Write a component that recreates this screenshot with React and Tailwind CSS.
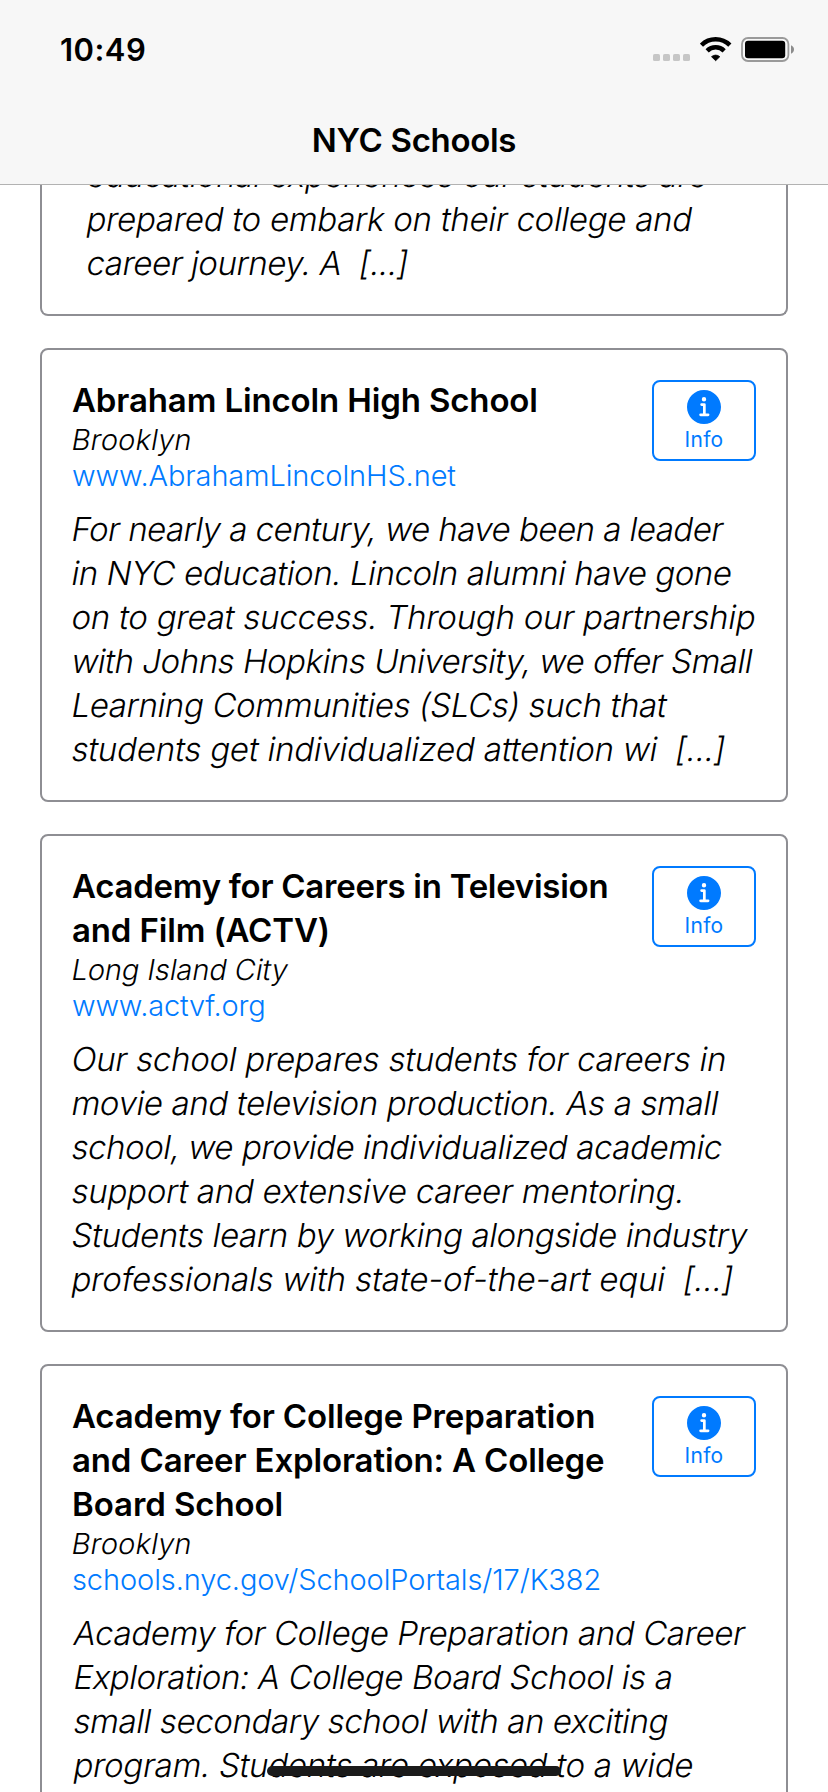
const previous = [
  { text: "educational experiences our students are", tracking: "tracking-[-0.31px]" },
  { text: "prepared to embark on their college and", tracking: "tracking-[-0.26px]" },
  { text: "career journey. A  [...]", tracking: "tracking-[-0.42px]" },
];

const schools = [
  {
    name: [{ text: "Abraham Lincoln High School", tracking: "tracking-[-0.14px]" }],
    city: { text: "Brooklyn", tracking: "tracking-[0.2px]" },
    site: { text: "www.AbrahamLincolnHS.net", tracking: "tracking-[-0.11px]" },
    indent: "pl-0",
    overview: [
      { text: "For nearly a century, we have been a leader", tracking: "tracking-[-0.51px]" },
      { text: "in NYC education. Lincoln alumni have gone", tracking: "tracking-[-0.42px]" },
      { text: "on to great success. Through our partnership", tracking: "tracking-[-0.23px]" },
      { text: "with Johns Hopkins University, we offer Small", tracking: "tracking-[-0.45px]" },
      { text: "Learning Communities (SLCs) such that", tracking: "tracking-[-0.34px]" },
      { text: "students get individualized attention wi  [...]", tracking: "tracking-[-0.2px]" },
    ],
  },
  {
    name: [
      { text: "Academy for Careers in Television", tracking: "tracking-[-0.27px]" },
      { text: "and Film (ACTV)", tracking: "tracking-[-0.15px]" },
    ],
    city: { text: "Long Island City", tracking: "tracking-[-0.09px]" },
    site: { text: "www.actvf.org", tracking: "tracking-[-0.2px]" },
    indent: "pl-0",
    overview: [
      { text: "Our school prepares students for careers in", tracking: "tracking-[-0.25px]" },
      { text: "movie and television production. As a small", tracking: "tracking-[-0.35px]" },
      { text: "school, we provide individualized academic", tracking: "tracking-[-0.41px]" },
      { text: "support and extensive career mentoring.", tracking: "tracking-[-0.23px]" },
      { text: "Students learn by working alongside industry", tracking: "tracking-[-0.35px]" },
      { text: "professionals with state-of-the-art equi  [...]", tracking: "tracking-[-0.15px]" },
    ],
  },
  {
    name: [
      { text: "Academy for College Preparation", tracking: "tracking-[-0.14px]" },
      { text: "and Career Exploration: A College", tracking: "tracking-[-0.14px]" },
      { text: "Board School", tracking: "tracking-[-0.08px]" },
    ],
    city: { text: "Brooklyn", tracking: "tracking-[0.2px]" },
    site: { text: "schools.nyc.gov/SchoolPortals/17/K382", tracking: "tracking-[-0.1px]" },
    indent: "pl-[2px]",
    overview: [
      { text: "Academy for College Preparation and Career", tracking: "tracking-[-0.38px]" },
      { text: "Exploration: A College Board School is a", tracking: "tracking-[-0.38px]" },
      { text: "small secondary school with an exciting", tracking: "tracking-[-0.38px]" },
      { text: "program. Students are exposed to a wide", tracking: "tracking-[-0.27px]" },
    ],
  },
];

function Lines({ lines, slanted = false }) {
  // Slanting the upright face keeps the two-storey "a" and the plain "f".
  return lines.map((line) => (
    <span
      key={line.text}
      className={`block whitespace-pre ${slanted ? "-skew-x-10" : ""} ${line.tracking}`}
    >
      {line.text}
    </span>
  ));
}

function StatusIcons() {
  return (
    <div className="flex pt-[6px]">
      <svg className="mr-[10px] h-[25px] w-[37px]" viewBox="0 0 37 25" fill="#c6c6c6">
        <rect x="0" y="17" width="7" height="7" rx="1.6" />
        <rect x="10" y="17" width="7" height="7" rx="1.6" />
        <rect x="20" y="17" width="7" height="7" rx="1.6" />
        <rect x="30" y="17" width="7" height="7" rx="1.6" />
      </svg>
      <svg className="mr-[9px] h-[25px] w-[32px]" viewBox="0 0 32 25" fill="none" stroke="#000" strokeWidth="4.5">
        <path d="M1.45 8.2a20.1 20.1 0 0 1 28.4 0" />
        <path d="M7.15 13.9a12 12 0 0 1 17 0" />
        <path
          d="M15.65 23.7 11.5 19.7a6.2 6.2 0 0 1 8.3 0Z"
          fill="#000"
          strokeWidth="0.8"
          strokeLinejoin="round"
        />
      </svg>
      <svg className="h-[25px] w-[53px]" viewBox="0 0 53 25">
        <rect x="1" y="1" width="46.4" height="23" rx="6" fill="none" stroke="#9a9a9a" strokeWidth="1.8" />
        <rect x="4" y="3.8" width="40.2" height="17.4" rx="3" fill="#000" />
        <path d="M50 8.3c1.8.7 3 2.3 3 4.2s-1.2 3.5-3 4.2Z" fill="#8c8c8c" />
      </svg>
    </div>
  );
}

function InfoButton() {
  return (
    <button className="mt-[2px] flex h-[81px] w-[104px] shrink-0 flex-col items-center rounded-lg border-2 border-[#007aff] pt-2 text-[#007aff]">
      <svg className="size-[34px] shrink-0" viewBox="56 56 400 400" fill="currentColor">
        <path d="M256 56C145.72 56 56 145.72 56 256s89.72 200 200 200 200-89.72 200-200S366.28 56 256 56zm0 82a26 26 0 1 1-26 26 26 26 0 0 1 26-26zm48 226h-88a16 16 0 0 1 0-32h28v-88h-16a16 16 0 0 1 0-32h32a16 16 0 0 1 16 16v104h28a16 16 0 0 1 0 32z" />
      </svg>
      <span className="mt-1 text-[21px] leading-6 tracking-[0.3px]">Info</span>
    </button>
  );
}

function SchoolCard({ school }) {
  return (
    <article className="shrink-0 rounded-lg border-2 border-[#8e8e93] px-[30px] pt-[28px] pb-[29px]">
      <div className="flex items-start justify-between">
        <div>
          <h2 className="text-[33px] leading-[44px] font-semibold">
            <Lines lines={school.name} />
          </h2>
          <p className="text-[29px] leading-[36px] font-light">
            <Lines lines={[school.city]} slanted />
          </p>
          <a className="block text-[29px] leading-[36px] font-light text-[#007aff]">
            <Lines lines={[school.site]} />
          </a>
        </div>
        <InfoButton />
      </div>
      <p className={`mt-[13px] text-[33px] leading-[44px] font-light ${school.indent}`}>
        <Lines lines={school.overview} slanted />
      </p>
    </article>
  );
}

export default function App() {
  return (
    <div className="relative flex h-[1792px] w-[828px] flex-col overflow-hidden bg-white font-['Inter',sans-serif] text-black">
      <header className="h-[185px] shrink-0 border-b border-[#b2b2b2] bg-[#f7f7f7] pt-[31px]">
        <div className="flex h-[38px] justify-between pr-[34px] pl-[60px]">
          <span className="text-[31px] leading-[38px] font-semibold tracking-[0.45px]">10:49</span>
          <StatusIcons />
        </div>
        <h1 className="mt-[49px] text-center text-[33px] leading-[44px] font-semibold tracking-[-0.31px]">
          NYC Schools
        </h1>
      </header>
      <main className="flex min-h-0 flex-1 flex-col gap-8 overflow-hidden px-10">
        <article className="flex h-[131px] shrink-0 flex-col justify-end overflow-hidden rounded-b-lg border-2 border-t-0 border-[#8e8e93] pb-[29px] pl-[45px]">
          <p className="text-[33px] leading-[44px] font-light">
            <Lines lines={previous} slanted />
          </p>
        </article>
        {schools.map((school) => (
          <SchoolCard key={school.name[0].text} school={school} />
        ))}
      </main>
      <div className="absolute top-[1766px] left-[267px] h-[10px] w-[294px] rounded-full bg-[#1a1a1a]" />
    </div>
  );
}
